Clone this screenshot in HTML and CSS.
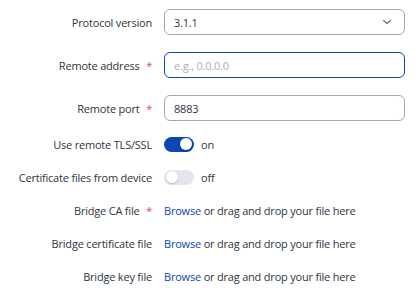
FILE: index.html
```html
<!DOCTYPE html>
<html lang="en">
<head>
    <meta charset="UTF-8">
    <meta name="viewport" content="width=device-width, initial-scale=1.0">
    <title>Bridge settings</title>
    <link rel="stylesheet" href="styles.css">
</head>
<body>
    <form class="form">
        <div class="row">
            <label class="label">Protocol version</label>
            <div class="select">
                <span>3.1.1</span>
                <svg class="chevron" width="10" height="6" viewBox="0 0 10 6">
                    <path d="M1.5 1.5 L5 4.5 L8.5 1.5" fill="none" stroke="#6b7280" stroke-width="1.3" stroke-linecap="round" stroke-linejoin="round"/>
                </svg>
            </div>
        </div>

        <div class="row">
            <label class="label">Remote address <span class="req">*</span></label>
            <input class="input focused" type="text" placeholder="e.g., 0.0.0.0">
        </div>

        <div class="row">
            <label class="label">Remote port <span class="req">*</span></label>
            <input class="input" type="text" value="8883">
        </div>

        <div class="row small first-small">
            <label class="label">Use remote TLS/SSL</label>
            <div class="switch-wrap">
                <span class="switch on"><span class="knob"></span></span>
                <span class="state">on</span>
            </div>
        </div>

        <div class="row small">
            <label class="label">Certificate files from device</label>
            <div class="switch-wrap">
                <span class="switch"><span class="knob"></span></span>
                <span class="state">off</span>
            </div>
        </div>

        <div class="row small">
            <label class="label">Bridge CA file <span class="req">*</span></label>
            <div class="file"><a href="#">Browse</a> or drag and drop your file here</div>
        </div>

        <div class="row small">
            <label class="label">Bridge certificate file</label>
            <div class="file"><a href="#">Browse</a> or drag and drop your file here</div>
        </div>

        <div class="row small">
            <label class="label">Bridge key file</label>
            <div class="file"><a href="#">Browse</a> or drag and drop your file here</div>
        </div>
    </form>
</body>
</html>
```

FILE: styles.css
```css
/* Reset */
body, html {
    margin: 0;
    padding: 0;
    background-color: #ffffff;
    color: #2f3540;
    font-family: 'Open Sans', 'Noto Sans', sans-serif;
    font-size: 11px;
    letter-spacing: -0.2px;
}

/* Form layout */
.form {
    display: flex;
    flex-direction: column;
    gap: 17px;
    padding: 9px 0 0 0;
}

.row {
    display: grid;
    grid-template-columns: 152px 241px;
    column-gap: 12px;
    align-items: center;
    height: 26px;
}

.row.small {
    height: 16px;
}

.row.first-small {
    margin-top: -2px;
}

.label {
    text-align: right;
    white-space: nowrap;
}

.req {
    color: #e5484d;
    margin-left: 4px;
}

/* Inputs */
.select,
.input {
    box-sizing: border-box;
    height: 26px;
    width: 241px;
    border: 1px solid #a3a9b4;
    border-radius: 6px;
    padding: 0 9px;
    font-family: inherit;
    font-size: 11px;
    letter-spacing: -0.2px;
    color: #2f3540;
    background: #ffffff;
    outline: none;
}

.select {
    display: flex;
    align-items: center;
    justify-content: space-between;
    padding-right: 12px;
}

.input.focused {
    border-color: #0b48b3;
}

.input::placeholder {
    color: #a9afb9;
}

/* Toggle switch */
.switch-wrap {
    display: flex;
    align-items: center;
    gap: 7px;
}

.switch {
    position: relative;
    width: 30px;
    height: 15px;
    border-radius: 8px;
    background-color: #e3e6eb;
}

.switch.on {
    background-color: #0b48b3;
}

.knob {
    position: absolute;
    top: 1.5px;
    left: 2px;
    width: 12px;
    height: 12px;
    border-radius: 50%;
    background: #ffffff;
    box-shadow: 0 1px 2px rgba(0, 0, 0, 0.2);
}

.switch.on .knob {
    left: 16px;
}

.state {
    color: #2f3540;
}

/* File picker */
.file {
    white-space: nowrap;
}

.file a {
    color: #0b48b3;
    text-decoration: none;
}
```
